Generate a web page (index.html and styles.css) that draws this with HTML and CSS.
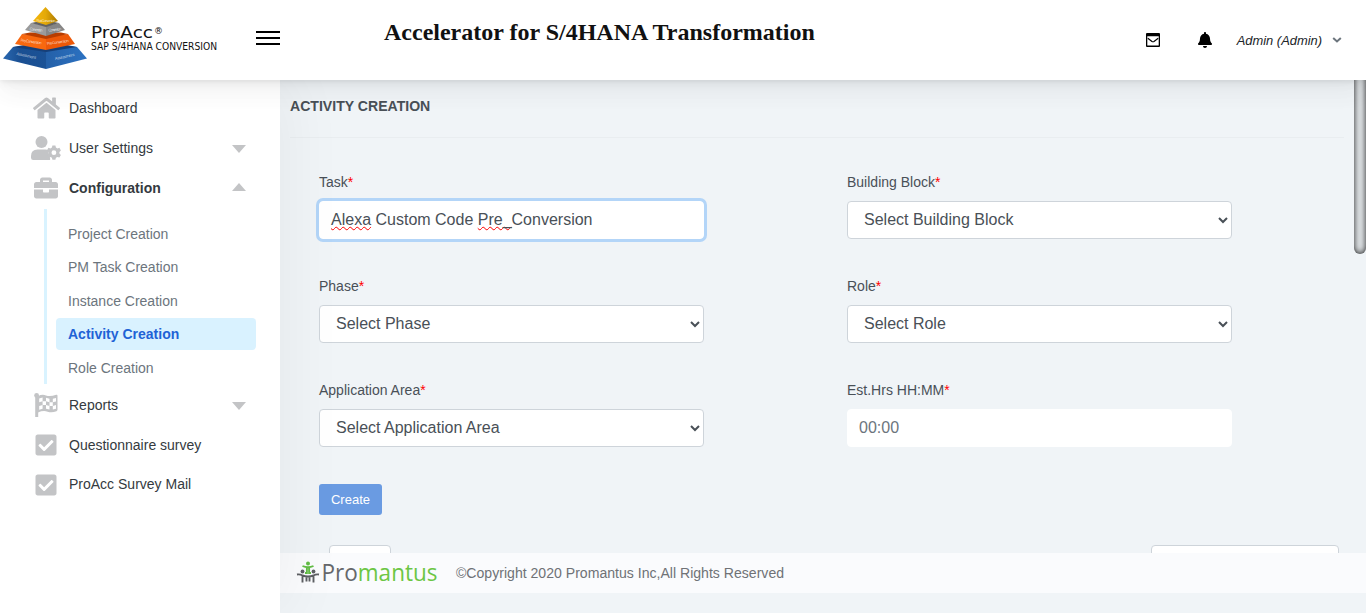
FILE: index.html
```html
<!DOCTYPE html>
<html lang="en">
<head>
<meta charset="utf-8">
<title>ProAcc - Activity Creation</title>
<link rel="stylesheet" href="styles.css">
</head>
<body>
<div class="app">
  <header class="header">
    <svg class="logo" width="222" height="76" viewBox="0 0 222 76">
      <defs>
        <linearGradient id="blueL"><stop offset="0" stop-color="#2a68b0"/><stop offset=".4" stop-color="#1a4f92"/><stop offset="1" stop-color="#1b5296"/></linearGradient>
        <linearGradient id="blueR"><stop offset="0" stop-color="#2460a8"/><stop offset="1" stop-color="#2c72c2"/></linearGradient>
        <linearGradient id="gold"><stop offset="0" stop-color="#f6b80c"/><stop offset=".5" stop-color="#e4a908"/><stop offset="1" stop-color="#a97700"/></linearGradient>
      </defs>
      <path fill="url(#blueL)" d="M13 47 31 45 46 50V69L3 58.500z"/>
      <path fill="url(#blueR)" d="M46 50 62 45 77 47 87 58.500 46 69z"/>
      <path fill="#163f78" d="M13 47 24 45H67L77 47 46 52z"/>
      <path fill="#f8680f" d="M15 44 22 34 46 37V50z"/>
      <path fill="#ed5808" d="M46 37 68 34 75 44 46 50z"/>
      <path fill="#b83d00" d="M22 34 30 32.500H61L68 34 46 39z"/>
      <path fill="#9a9a9a" d="M25 30 31 23 46 26V36z"/>
      <path fill="#858585" d="M46 26 59 23 65 30 46 36z"/>
      <path fill="#626262" d="M31 23 36 22H54L59 23 46 27z"/>
      <path fill="url(#gold)" d="M45.500 7 33 21 46 25 58 21z"/>
      <g class="pyramid-text" text-anchor="middle">
        <text x="46" y="22" textLength="19">Post Conversion</text>
        <text x="36" y="31" textLength="13" transform="rotate(6 36 31)">Conversion</text>
        <text x="55" y="31" textLength="13" transform="rotate(-6 55 31)">Conversion</text>
        <text x="31" y="43" textLength="21" transform="rotate(8 31 43)">Pre-Conversion</text>
        <text x="58" y="43.500" textLength="22" transform="rotate(-8 58 43.500)">Pre-Conversion</text>
        <text x="26" y="57" textLength="20" transform="rotate(12 26 57)">Assessment</text>
        <text x="65" y="58" textLength="20" transform="rotate(-12 65 58)">Assessment</text>
      </g>
      <text class="logo-name" x="91" y="38" textLength="62" lengthAdjust="spacingAndGlyphs">ProAcc</text>
      <text class="logo-reg" x="154" y="34">®</text>
      <text class="logo-sub" x="91" y="50" textLength="126" lengthAdjust="spacingAndGlyphs">SAP S/4HANA CONVERSION</text>
    </svg>
    <button class="burger" aria-label="Toggle menu"><span></span><span></span><span></span></button>
    <h1 class="title">Accelerator for S/4HANA Transformation</h1>
    <div class="tools">
      <svg width="14" height="14" viewBox="0 0 14 14"><path fill-rule="evenodd" d="M1 0h12a1 1 0 0 1 1 1v12a1 1 0 0 1-1 1H1a1 1 0 0 1-1-1V1a1 1 0 0 1 1-1zM1.300 3.300v9.200h11.400V3.300z"/><path d="M1.800 5.300 6 8.400q1 .7 2 0l4.200-3.100" fill="none" stroke="#000" stroke-width="1.200"/></svg>
      <svg class="bell" width="14" height="16" viewBox="0 0 448 512"><path d="M224 512c35.320 0 63.970-28.650 63.970-64H160.030c0 35.350 28.650 64 63.970 64zm215.390-149.710c-19.320-20.760-55.470-51.990-55.470-154.290 0-77.700-54.480-139.900-127.940-155.160V32c0-17.670-14.320-32-31.980-32s-31.980 14.330-31.980 32v20.840C118.560 68.100 64.080 130.300 64.080 208c0 102.300-36.150 133.530-55.470 154.290-6 6.450-8.660 14.160-8.610 21.710.11 16.400 12.980 32 32.100 32h383.800c19.120 0 32-15.600 32.100-32 .05-7.550-2.610-15.270-8.610-21.710z"/></svg>
      <span class="user">Admin (Admin)</span>
      <svg width="10" height="6" viewBox="0 0 10 6"><path d="M1.200 1 5 4.500 8.800 1" fill="none" stroke="#6c757d" stroke-width="2"/></svg>
    </div>
  </header>

  <nav class="sidebar">
    <a class="item"><span class="icon"><svg width="27" height="24" viewBox="0 0 576 512"><path d="M280.370 148.260L96 300.110V464a16 16 0 0 0 16 16l112.060-.29a16 16 0 0 0 15.920-16V368a16 16 0 0 1 16-16h64a16 16 0 0 1 16 16v95.640a16 16 0 0 0 16 16.050L464 480a16 16 0 0 0 16-16V300L295.670 148.260a12.190 12.190 0 0 0-15.300 0zM571.600 251.470L488 182.560V44.050a12 12 0 0 0-12-12h-56a12 12 0 0 0-12 12v72.610L318.470 43a48 48 0 0 0-61 0L4.340 251.470a12 12 0 0 0-1.600 16.900l25.500 31A12 12 0 0 0 45.150 301l235.220-193.740a12.190 12.190 0 0 1 15.300 0L530.900 301a12 12 0 0 0 16.900-1.600l25.500-31a12 12 0 0 0-1.700-16.930z"/></svg></span>Dashboard</a>
    <a class="item"><span class="icon"><svg width="30" height="24" viewBox="0 0 30 24"><circle cx="10.500" cy="6" r="6"/><path d="M6.500 13.500h8q1.500 0 3 .7v4.500q0 1.700 1.600 2.800V24H2.200Q0 24 0 21.800V20q0-6.500 6.500-6.500z"/><path fill-rule="evenodd" d="M21.400 9.600h3l.5 2 1.500.8 2-.6 1.500 2.600-1.500 1.500v1.600l1.500 1.500-1.500 2.600-2-.6-1.500.8-.5 2h-3l-.5-2-1.500-.8-2 .6-1.500-2.600 1.500-1.500v-1.600l-1.500-1.500 1.500-2.600 2 .6 1.500-.8zM22.900 14.300a2.400 2.400 0 1 0 0 4.800 2.400 2.400 0 0 0 0-4.800z"/></svg></span>User Settings<i class="caret"></i></a>
    <a class="item open"><span class="icon"><svg width="24" height="24" viewBox="0 0 512 512"><path d="M320 336c0 8.840-7.160 16-16 16h-96c-8.840 0-16-7.160-16-16v-48H0v144c0 25.600 22.400 48 48 48h416c25.600 0 48-22.400 48-48V288H320v48zm144-208h-80V80c0-25.600-22.400-48-48-48H176c-25.600 0-48 22.400-48 48v48H48c-25.600 0-48 22.400-48 48v80h512v-80c0-25.600-22.400-48-48-48zm-144 0H192V96h128v32z"/></svg></span>Configuration<i class="caret up"></i></a>
    <div class="submenu">
      <a>Project Creation</a>
      <a>PM Task Creation</a>
      <a>Instance Creation</a>
      <a class="active">Activity Creation</a>
      <a>Role Creation</a>
    </div>
    <a class="item"><span class="icon"><svg width="24" height="24" viewBox="0 0 24 24"><circle cx="2.600" cy="2.400" r="2.400"/><path d="M1.200 2h3v22h-3z"/><path fill-rule="evenodd" d="M4 3.200q4-2.200 8-.8t10.200-.6q1.300-.5 1.300 1v14q0 1-1 1.400-4.700 2-8.900.5T4 19.500zM5.200 5.600 8.600 4.500v3.700L5.200 9.300zM12 4.700l3.500 1v3.600L12 8.300zM18.800 5.800l3.200-.9v3.600l-3.200.8zM8.600 8.200 12 8.300v3.800l-3.400-.1zM15.500 9.300h3.300v3.600h-3.300zM5.200 13 8.600 12v3.700l-3.400 1zM12 12.100l3.500.8v3.700l-3.500-.9zM18.800 12.900l3.200-.8v3.600l-3.200.9z"/></svg></span>Reports<i class="caret"></i></a>
    <a class="item"><span class="icon"><svg width="22" height="24" viewBox="0 0 448 512"><path d="M400 480H48c-26.510 0-48-21.490-48-48V80c0-26.510 21.490-48 48-48h352c26.510 0 48 21.490 48 48v352c0 26.510-21.490 48-48 48zm-204.686-98.059l184-184c6.248-6.248 6.248-16.379 0-22.627l-22.627-22.627c-6.248-6.248-16.379-6.249-22.628 0L184 302.745l-70.059-70.059c-6.248-6.248-16.379-6.248-22.628 0l-22.627 22.627c-6.248 6.248-6.248 16.379 0 22.627l104 104c6.249 6.250 16.379 6.250 22.628.001z"/></svg></span>Questionnaire survey</a>
    <a class="item"><span class="icon"><svg width="22" height="24" viewBox="0 0 448 512"><path d="M400 480H48c-26.510 0-48-21.490-48-48V80c0-26.510 21.490-48 48-48h352c26.510 0 48 21.490 48 48v352c0 26.510-21.490 48-48 48zm-204.686-98.059l184-184c6.248-6.248 6.248-16.379 0-22.627l-22.627-22.627c-6.248-6.248-16.379-6.249-22.628 0L184 302.745l-70.059-70.059c-6.248-6.248-16.379-6.248-22.628 0l-22.627 22.627c-6.248 6.248-6.248 16.379 0 22.627l104 104c6.249 6.250 16.379 6.250 22.628.001z"/></svg></span><span class="item-label">ProAcc Survey Mail</span></a>
  </nav>

  <main class="main">
    <section class="content">
      <h2 class="page-title">ACTIVITY CREATION</h2>
      <form class="form">
        <div class="field"><label>Task<b>*</b></label><div class="control focused" contenteditable="true" spellcheck="false"><span class="typo">Alexa</span> Custom Code <span class="typo">Pre_</span>Conversion</div></div>
        <div class="field"><label>Building Block<b>*</b></label><select class="control"><option>Select Building Block</option></select></div>
        <div class="field"><label>Phase<b>*</b></label><select class="control"><option>Select Phase</option></select></div>
        <div class="field"><label>Role<b>*</b></label><select class="control"><option>Select Role</option></select></div>
        <div class="field"><label>Application Area<b>*</b></label><select class="control"><option>Select Application Area</option></select></div>
        <div class="field"><label>Est.Hrs HH:MM<b>*</b></label><input class="control plain" placeholder="00:00"></div>
      </form>
      <button class="create">Create</button>
      <div class="table-tools"><span class="length-box"></span><span class="search-box"></span></div>
    </section>
    <footer class="footer">
      <svg width="142" height="36" viewBox="0 -4 142 36">
        <g fill="none" stroke="#5d5f63" stroke-width="1.900"><path d="M0 15.500Q3 15 5.500 16.500 8 17.500 11 17.500T16.500 16.500Q19 15 22 15.500M5.500 16v7.500M9.500 18v4.500M12.500 18v4.500M16.500 16v7.500"/></g>
        <g fill="#5d5f63"><circle cx="5.500" cy="12.500" r="1.900"/><circle cx="16.500" cy="12.500" r="1.900"/></g>
        <g fill="none" stroke="#62bd45" stroke-width="1.900"><path d="M5.500 7Q11 9.500 16.500 7M9.900 8.500v5.500H8M12.100 8.500v5.500H14"/></g>
        <circle cx="11" cy="4.500" r="2" fill="#62bd45"/>
        <text class="brand" x="24.500" y="22" textLength="116" lengthAdjust="spacingAndGlyphs"><tspan fill="#66686b">Pro</tspan><tspan fill="#6cc644">mantus</tspan></text>
      </svg>
      <span class="copyright">©Copyright 2020 Promantus Inc,All Rights Reserved</span>
    </footer>
  </main>
  <div class="scroll-thumb"></div>
</div>
</body>
</html>
```
FILE: styles.css
```css
* { box-sizing: border-box; }
body {
  margin: 0;
  overflow: hidden;
  font-family: "Liberation Sans", Arial, sans-serif;
  font-size: 14px;
  color: #495057;
  background: #f0f4f7;
}
.app {
  position: relative;
  display: grid;
  grid-template: 80px 533px / 280px 1fr;
  height: 613px;
}

/* Header */
.header {
  grid-column: 1 / 3;
  z-index: 10;
  display: flex;
  background: #fff;
  box-shadow: 0 7.5px 35px rgba(4,9,20,.03), 0 15px 22.500px rgba(4,9,20,.03),
    0 4px 8.500px rgba(4,9,20,.05), 0 2px 3px rgba(4,9,20,.03);
}
.logo { overflow: visible; }
.pyramid-text { font: 4px "Open Sans", sans-serif; fill: #fff; fill-opacity: .75; }
.logo-name { font: 16.500px "DejaVu Sans", sans-serif; fill: #111; }
.logo-reg { font: 9px "DejaVu Sans", sans-serif; fill: #111; }
.logo-sub { font: 10px "DejaVu Sans", sans-serif; fill: #111; }
.burger {
  display: flex;
  flex-direction: column;
  gap: 4px;
  width: 24px;
  margin: 31px 0 0 34px;
  padding: 0;
  border: 0;
  background: none;
}
.burger span { width: 24px; height: 2px; background: #000; }
.title {
  margin: 18px 0 0 104px;
  font: bold 24px/28px "Liberation Serif", "Times New Roman", serif;
  color: #111;
  white-space: nowrap;
}
.tools {
  display: flex;
  align-items: center;
  height: 80px;
  margin-left: auto;
  padding-right: 24px;
}
.bell { margin: 0 25px 0 38px; }
.user { margin-right: 10px; font-size: 12.900px; font-style: italic; color: #212529; }

/* Sidebar */
.sidebar {
  z-index: 5;
  padding-top: 8px;
  background: #fff;
  box-shadow: 7px 0 60px rgba(0,0,0,.05);
}
.item {
  display: flex;
  align-items: center;
  height: 40px;
  padding: 0 34px 0 23px;
  font-size: 14px;
  color: #343a40;
}
.icon { display: flex; justify-content: center; width: 46px; }
.icon svg { fill: #c3c4c6; }
.item-label { margin-top: -2px; }
.open { font-weight: bold; }
.caret {
  margin-left: auto;
  margin-top: 2px;
  border: solid transparent;
  border-width: 8px 7px 0;
  border-top-color: #c3c4c6;
}
.caret.up { margin-top: -2px; border-width: 0 7px 8px; border-bottom-color: #c3c4c6; }
.submenu {
  height: 175px;
  margin: 1px 24px 1px 44px;
  padding: 8.500px 0 0 9px;
  border-left: 3px solid #d9f3ff;
}
.submenu a {
  display: block;
  height: 32px;
  margin-bottom: 1.500px;
  padding-left: 12px;
  border-radius: 4px;
  font-size: 14px;
  line-height: 33px;
  color: #6c757d;
}
.submenu .active { background: #d9f2ff; color: #1f63d6; font-weight: bold; }

/* Main */
.main { display: grid; grid-template-rows: 473px 40px; min-width: 0; }
.content { overflow: hidden; padding: 0 22px 0 10px; }
.page-title {
  height: 58px;
  margin: 0;
  padding-top: 18px;
  border-bottom: 1px solid #e9edf0;
  font-size: 14.080px;
  line-height: 16px;
}
.form {
  display: grid;
  grid-template-columns: 385px 385px;
  gap: 37px 143px;
  padding: 34px 29px 0;
}
.field label { display: block; height: 21px; margin-bottom: 8px; line-height: 20px; }
.field b { color: #f00; font-weight: normal; }
.control {
  display: block;
  width: 100%;
  height: 38px;
  padding: 6px 11px;
  border: 1px solid #ced4da;
  border-radius: 4px;
  outline: 0;
  background: #fff;
  font: 16px/24px "Liberation Sans", Arial, sans-serif;
  color: #495057;
}
select.control { padding: 5px 12px 7px; }
.focused { border-color: #fff; box-shadow: 0 0 0 3px #b3d5f8; }
.plain { border-color: #fff; }
.plain::placeholder { color: #6c757d; }
.typo { text-decoration: underline wavy #f00 1px; text-decoration-skip-ink: none; }
.create {
  display: block;
  width: 63px;
  height: 31px;
  margin: 37px 0 30px 29px;
  padding: 0;
  border: 0;
  border-radius: 3px;
  background: #6a9be2;
  font: 13px "Liberation Sans", Arial, sans-serif;
  color: #fff;
}
.table-tools { display: flex; justify-content: space-between; padding: 0 5px 0 39px; }
.table-tools span { height: 31px; border: 1px solid #ced4da; border-radius: 4px; background: #fff; }
.length-box { width: 62px; }
.search-box { width: 188px; }
.footer {
  display: flex;
  align-items: center;
  gap: 17px;
  padding-left: 17px;
  background: #fafbfd;
  color: #6f7276;
}
.footer svg { overflow: visible; }
.copyright { font-size: 14.080px; }
.brand { font: 23.500px "Open Sans", sans-serif; }
.scroll-thumb {
  position: absolute;
  z-index: 6;
  top: 70px;
  right: 0;
  width: 12px;
  height: 184px;
  border-radius: 6px;
  background: #dfe3e6;
  box-shadow: inset 0 0 6px rgba(0,0,0,.9);
}
```
